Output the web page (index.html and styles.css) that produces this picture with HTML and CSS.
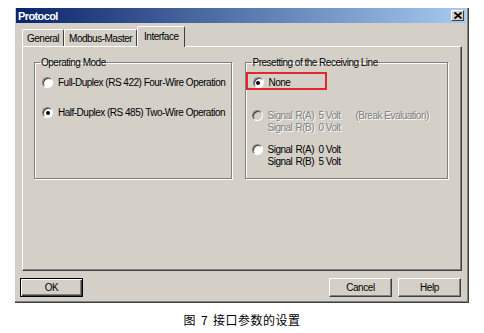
FILE: index.html
```html
<!DOCTYPE html>
<html lang="en">
<head>
    <meta charset="UTF-8">
    <title>Protocol</title>
    <link rel="stylesheet" href="styles.css">
</head>
<body>
    <div class="dialog">
        <div class="titlebar">
            <span class="title">Protocol</span>
            <span class="close">
                <svg width="8" height="7" viewBox="0 0 8 7"><path d="M0.5 0.5 L7.5 6.5 M7.5 0.5 L0.5 6.5" stroke="#000" stroke-width="1.8"/></svg>
            </span>
        </div>
        <div class="content">
            <div class="tabs">
                <div class="tab">General</div>
                <div class="tab">Modbus-Master</div>
                <div class="tab active">Interface</div>
            </div>
            <div class="panel">
                <fieldset class="group group-mode">
                    <legend>Operating Mode</legend>
                    <div class="option">
                        <span class="radio"></span>
                        <span>Full-Duplex (RS 422) Four-Wire Operation</span>
                    </div>
                    <div class="option">
                        <span class="radio checked"></span>
                        <span>Half-Duplex (RS 485) Two-Wire Operation</span>
                    </div>
                </fieldset>
                <fieldset class="group group-line">
                    <legend>Presetting of the Receiving Line</legend>
                    <div class="marked">
                        <div class="option">
                            <span class="radio checked"></span>
                            <span>None</span>
                        </div>
                    </div>
                    <div class="option disabled">
                        <span class="radio"></span>
                        <div class="signal">
                            <span>Signal</span><span>R(A)</span><span>5 Volt</span><span>(Break Evaluation)</span>
                            <span>Signal</span><span>R(B)</span><span>0 Volt</span><span></span>
                        </div>
                    </div>
                    <div class="option">
                        <span class="radio"></span>
                        <div class="signal">
                            <span>Signal</span><span>R(A)</span><span>0 Volt</span><span></span>
                            <span>Signal</span><span>R(B)</span><span>5 Volt</span><span></span>
                        </div>
                    </div>
                </fieldset>
            </div>
            <div class="buttons">
                <button class="button default">OK</button>
                <div class="spacer"></div>
                <button class="button">Cancel</button>
                <button class="button">Help</button>
            </div>
        </div>
    </div>
    <p class="caption"><span>图</span> <span>7</span> <span>接口参数的设置</span></p>
</body>
</html>
```

FILE: styles.css
```css
body {
    margin: 0;
    background-color: #fff;
    font-family: "Liberation Sans", Arial, sans-serif;
    font-size: 10px;
    letter-spacing: -0.5px;
    color: #000;
}

.dialog {
    box-sizing: border-box;
    width: 454px;
    height: 295px;
    margin: 8px 0 0 15px;
    background-color: #d4d0c8;
    border-right: 1px solid #404040;
    border-bottom: 1px solid #404040;
    box-shadow: inset -1px -1px 0 #808080;
    display: flex;
    flex-direction: column;
}

.titlebar {
    height: 15px;
    margin: 0 2px 0 1px;
    padding: 0 2px;
    display: flex;
    align-items: center;
    justify-content: space-between;
    background: linear-gradient(to right, #0a246a, #a6caf0);
}

.title {
    color: #fff;
    font-weight: bold;
    font-size: 11px;
    letter-spacing: -0.6px;
}

.close {
    box-sizing: border-box;
    width: 13px;
    height: 11px;
    background-color: #d4d0c8;
    border-top: 1px solid #fff;
    border-left: 1px solid #fff;
    border-right: 1px solid #404040;
    border-bottom: 1px solid #404040;
    display: flex;
    align-items: center;
    justify-content: center;
}

.content {
    padding: 3px 6px 0 7px;
    display: flex;
    flex-direction: column;
}

.tabs {
    height: 20px;
    display: flex;
    align-items: flex-end;
}

.tab {
    box-sizing: border-box;
    height: 17px;
    padding: 3px 4px 0 4px;
    border-top: 1px solid #fff;
    border-left: 1px solid #fff;
    border-right: 1px solid #404040;
    border-radius: 2px 2px 0 0;
}

.tab.active {
    height: 21px;
    margin-bottom: -1px;
    padding: 4px 6px 0 6px;
    background-color: #d4d0c8;
    position: relative;
}

.panel {
    box-sizing: border-box;
    width: 440px;
    height: 225px;
    padding: 10px 13px 0 11px;
    border-top: 1px solid #fff;
    border-left: 1px solid #fff;
    border-right: 1px solid #404040;
    border-bottom: 1px solid #404040;
    box-shadow: inset -1px -1px 0 #808080;
    display: flex;
    gap: 13px;
}

.group {
    box-sizing: border-box;
    height: 122px;
    margin: 0;
    padding: 0 0 0 7px;
    border: 1px solid #808080;
    box-shadow: 1px 1px 0 #fff, inset 1px 1px 0 #fff;
}

.group-mode {
    width: 198px;
}

.group-line {
    width: 204px;
    padding-left: 0;
}

legend {
    padding: 0 1px;
    margin-left: -2px;
    font-size: 10px;
}

.group-line legend {
    margin-left: 6px;
}

.option {
    display: flex;
    align-items: flex-start;
    gap: 5px;
    line-height: 12px;
}

.group-mode .option {
    margin-top: 9px;
    margin-bottom: 18px;
}

.radio {
    box-sizing: border-box;
    flex-shrink: 0;
    width: 11px;
    height: 11px;
    border-radius: 50%;
    background-color: #fff;
    border: 1px solid;
    border-color: #808080 #fff #fff #808080;
    box-shadow: inset 1px 1px 0 #404040;
    display: flex;
    align-items: center;
    justify-content: center;
}

.radio.checked::after {
    content: "";
    width: 4px;
    height: 4px;
    border-radius: 50%;
    background-color: #000;
}

.marked {
    box-sizing: border-box;
    width: 81px;
    height: 18px;
    margin-top: 4px;
    padding: 3px 0 0 5px;
    border: 2px solid #e3262d;
}

.group-line .option {
    padding-left: 6px;
}

.group-line .marked .option {
    padding-left: 0;
}

.group-line .option.disabled {
    margin-top: 20px;
}

.group-line .option + .option {
    margin-top: 10px;
}

.signal {
    display: grid;
    grid-template-columns: 28px 23px 37px max-content;
    justify-content: start;
}

.disabled {
    color: #808080;
    text-shadow: 1px 1px 0 #fff;
}

.disabled .radio {
    background-color: #d4d0c8;
}

.buttons {
    display: flex;
    gap: 6px;
    margin-top: 7px;
    margin-left: -2px;
    width: 441px;
}

.spacer {
    flex: 1;
}

.button {
    box-sizing: border-box;
    width: 63px;
    height: 19px;
    padding: 0;
    background-color: #d4d0c8;
    font-family: "Liberation Sans", Arial, sans-serif;
    font-size: 10px;
    letter-spacing: -0.4px;
    color: #000;
    border-top: 1px solid #fff;
    border-left: 1px solid #fff;
    border-right: 1px solid #404040;
    border-bottom: 1px solid #404040;
    box-shadow: inset -1px -1px 0 #808080;
}

.button.default {
    border: 1px solid #000;
    box-shadow: inset 1px 1px 0 #fff, inset -1px -1px 0 #404040, inset -2px -2px 0 #808080;
}

.caption {
    margin: 10px 0 0 0;
    display: flex;
    justify-content: center;
    gap: 5px;
    font-family: "Noto Sans CJK SC", sans-serif;
    font-size: 12px;
    letter-spacing: 0.5px;
    line-height: 14px;
}
```
